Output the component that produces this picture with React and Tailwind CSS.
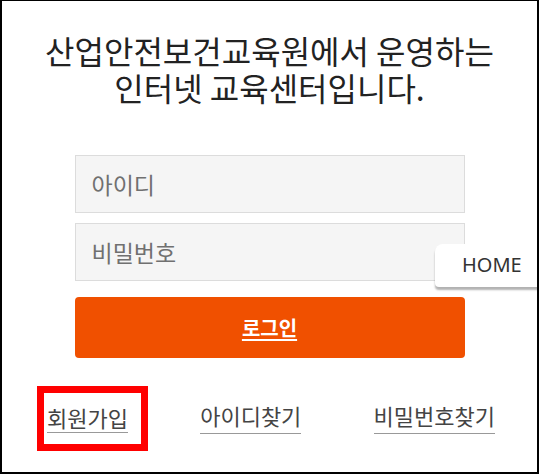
import React from "react";

const font = { fontFamily: '"Noto Sans CJK KR", "Noto Sans", sans-serif' };

function Field({ placeholder }) {
  return (
    <input
      type="text"
      placeholder={placeholder}
      className="w-full h-[58px] bg-[#f5f5f5] border border-[#dcdcdc] px-4 text-[23px] text-[#333] placeholder:text-[#707070] outline-none"
    />
  );
}

export default function App() {
  return (
    <div
      className="relative w-[539px] h-[474px] bg-white border-l-2 border-t border-r-2 border-b-2 border-black overflow-hidden"
      style={font}
    >
      <h1 className="pt-[31px] text-center text-[32px] leading-[37px] text-[#222] font-normal">
        산업안전보건교육원에서 운영하는
        <br />
        인터넷 교육센터입니다.
      </h1>

      <form className="mt-[49px] mx-auto w-[390px] flex flex-col gap-[10px]" onSubmit={(e) => e.preventDefault()}>
        <Field placeholder="아이디" />
        <Field placeholder="비밀번호" />
        <button
          type="submit"
          className="mt-[6px] h-[61px] rounded-[4px] bg-[#f05000] text-white text-[20px] font-semibold underline underline-offset-[3px]"
        >
          로그인
        </button>
      </form>

      <div className="mt-[43px] flex justify-between pl-[45px] pr-[42px] text-[22px] text-[#444]">
        <div className="relative">
          <a href="#" className="border-b border-[#999] leading-[29px] inline-block">
            회원가입
          </a>
          <span className="absolute left-[-10px] top-[-15px] w-[111px] h-[65px] border-[7px] border-[#ff0000]" />
        </div>
        <a href="#" className="border-b border-[#999] leading-[29px] inline-block">
          아이디찾기
        </a>
        <a href="#" className="border-b border-[#999] leading-[29px] inline-block">
          비밀번호찾기
        </a>
      </div>

      <div
        className="absolute left-[433px] top-[243px] w-[120px] h-[43px] bg-white rounded-tl-[8px] rounded-bl-[4px] shadow-[0_3px_2px_rgba(0,0,0,0.3)] pl-[27px] pt-[9px] text-[20px] leading-[24px] text-[#333]"
        style={{ fontFamily: '"Noto Sans", sans-serif' }}
      >
        HOME
      </div>
    </div>
  );
}
